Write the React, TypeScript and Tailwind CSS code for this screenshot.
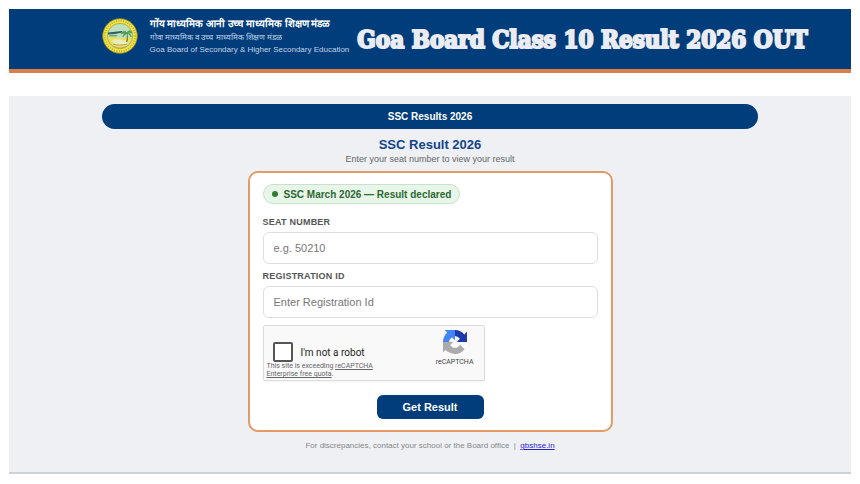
import type { ReactNode } from 'react'

function BoardSeal() {
  return (
    <svg className="h-9 w-9 shrink-0" viewBox="0 0 36 36" role="img" aria-label="Goa Board seal">
      <circle cx="18" cy="18" r="17.3" fill="#f0e23f" stroke="#8d8a35" strokeWidth="0.8" />
      <circle cx="18" cy="18" r="15.2" fill="none" stroke="#b79f35" strokeWidth="1.8" strokeDasharray="0.8 1.6" />
      <circle cx="18" cy="18" r="12.6" fill="#bfe0c0" stroke="#a09a3c" strokeWidth="0.7" />
      <path d="M6 20c4-2 8-1 12 0s8 0 12-1a12.3 12.3 0 0 1-24 1z" fill="#ebe350" />
      <path d="M10 22c4-2 9-1 12 1l5-1-2 4c-5 2-9 2-13 0z" fill="#e6ecc0" />
      <path d="M6 14.500l14-1.500v1.600l-7 1.400-7 .6z" fill="#355f58" />
      <path d="M7 17h9l-2 1.500H7.500z" fill="#6ba593" />
      <path d="M24.500 15c.6 3 .4 6-.5 9h1.500c.7-3 .6-6 0-9z" fill="#7d7b2a" />
      <path d="M25 15c-2-3-5-2-6 1 2-1 4-1 6-1zm0 0c1-3 4-3 5 0-2-.5-3 0-5 0zm0 0c-3 0-4 2-4 4 1-2 3-3 4-4zm0 0c2 0 4 1 4 4-1-2-2-3-4-4z" fill="#4d9e58" stroke="#4d9e58" strokeWidth="0.7" />
      <path d="M11 26c4 1.500 9 1.500 14 0" fill="none" stroke="#c79a35" strokeWidth="1" />
      <path d="M12 28.500c4 2 8 2 12 0" fill="none" stroke="#d4953a" strokeWidth="0.8" />
    </svg>
  )
}

function RecaptchaLogo() {
  return (
    <svg className="h-6 w-6" viewBox="0 0 64 64" aria-hidden="true">
      <path d="M64 31.955a33 33 0 0 0-.037-1.427V4.640l-7.157 7.157C50.949 4.627 42.033.045 32.046.045c-10.393 0-19.626 4.960-25.461 12.642l11.731 11.855a15.550 15.550 0 0 1 4.754-5.334c2.050-1.600 4.955-2.908 8.976-2.908.486 0 .861.057 1.136.164 4.982.393 9.300 3.143 11.843 7.133l-8.304 8.304c10.518-.041 22.400-.066 27.279.054" fill="#1c3aa9" />
      <path d="M31.862.094a33 33 0 0 0-1.427.037H4.547l7.157 7.157C4.534 13.145-.048 22.061-.048 32.048c0 10.393 4.960 19.626 12.642 25.461l11.855-11.731a15.550 15.550 0 0 1-5.334-4.754c-1.600-2.050-2.908-4.955-2.908-8.976 0-.486.057-.861.164-1.136.393-4.982 3.143-9.300 7.133-11.843l8.304 8.304c-.041-10.518-.066-22.400.054-27.279" fill="#4285f4" />
      <path d="M.001 32.045a33 33 0 0 0 .037 1.427V59.360l7.157-7.157c5.857 7.170 14.773 11.752 24.760 11.752 10.393 0 19.626-4.960 25.461-12.642L45.685 39.458a15.550 15.550 0 0 1-4.754 5.334c-2.050 1.600-4.955 2.908-8.976 2.908-.486 0-.861-.057-1.136-.164-4.982-.393-9.300-3.143-11.843-7.133l8.304-8.304c-10.518.041-22.400.066-27.279-.054" fill="#ababab" />
    </svg>
  )
}

function Field({ id, label, placeholder }: { id: string; label: ReactNode; placeholder: string }) {
  return (
    <div className="mt-1.5">
      <label htmlFor={id} className="block text-[9px] leading-3 font-bold tracking-wide text-[#555] uppercase">
        {label}
      </label>
      <input
        id={id}
        type="text"
        placeholder={placeholder}
        className="mt-1 block h-8 w-full rounded-md border border-[#dcdee2] bg-white px-2.5 text-[11px] text-[#333] placeholder:text-[#777]"
      />
    </div>
  )
}

function Captcha() {
  return (
    <div className="mt-[7px] flex h-14 w-[222px] max-w-full justify-between rounded-xs border border-[#dcdcdc] bg-[#f9f9f9] pr-2.5 pl-[3px] font-['Roboto',sans-serif] shadow-xs">
      <div className="pt-4">
        <label className="flex items-center gap-2 pl-1.5 text-[10px] text-[#222]">
          <input type="checkbox" className="h-5 w-5 appearance-none rounded-xs border-2 border-[#555] bg-white" />
          I'm not a robot
        </label>
        <p className="text-[7px] leading-2 text-[#666]">
          This site is exceeding <a href="#recaptcha" className="underline">reCAPTCHA</a>
          <br />
          <a href="#quota" className="underline">Enterprise free quota</a>.
        </p>
      </div>
      <div className="flex flex-col items-center pt-1">
        <RecaptchaLogo />
        <span className="mt-1 text-[7px] leading-2 text-[#444]">reCAPTCHA</span>
      </div>
    </div>
  )
}

export default function App() {
  return (
    <div className="bg-white p-[9px] font-['Liberation_Sans',Arial,sans-serif]">
      <header className="border-b-4 border-[#d97f49] bg-[#003d7a]">
        <div className="flex h-[60px] items-center pb-1.5 pl-[11%]">
          <BoardSeal />
          <div className="ml-3 shrink-0 whitespace-nowrap text-[#c3d3e6]">
            <p className="text-[10px] leading-4 font-bold text-white">गोंय माध्यमिक आनी उच्च माध्यमिक शिक्षण मंडळ</p>
            <p className="text-[8px] leading-3">गोवा माध्यमिक व उच्च माध्यमिक शिक्षण मंडळ</p>
            <p className="text-[8px] leading-3">Goa Board of Secondary &amp; Higher Secondary Education</p>
          </div>
          <h1 className="ml-2 pt-2 font-['DejaVu_Serif_Condensed','DejaVu_Serif',serif] text-[24px] font-bold whitespace-nowrap text-[#ebecf2] [-webkit-text-stroke:2px_#ebecf2]">
            Goa Board Class 10 Result 2026 OUT
          </h1>
        </div>
      </header>

      <main className="mt-[23px] flex flex-col items-center border-b-2 border-[#cfd1d6] bg-[#eef0f4] pt-2 pb-5">
        <div className="w-[78%] rounded-full bg-[#003d7a] text-center text-[10px] leading-[25px] font-bold text-white">
          SSC Results 2026
        </div>
        <h2 className="mt-2 text-[13px] leading-4 font-bold text-[#124489]">SSC Result 2026</h2>
        <p className="text-[9px] leading-3 text-[#666]">Enter your seat number to view your result</p>

        <form
          onSubmit={(e) => e.preventDefault()}
          className="mt-1.5 w-[365px] max-w-full rounded-[10px] border-2 border-[#e29a66] bg-white px-[13px] py-[11px]"
        >
          <div className="mb-3 flex h-5 w-fit items-center gap-1.5 rounded-full border border-[#c6e3c9] bg-[#e8f5e9] px-2 text-[10px] font-bold text-[#2c6a31]">
            <span className="h-1.5 w-1.5 rounded-full bg-[#2e7d32]" />
            SSC March 2026 — Result declared
          </div>
          <Field id="seat" label="Seat Number" placeholder="e.g. 50210" />
          <Field id="registration" label="Registration ID" placeholder="Enter Registration Id" />
          <Captcha />
          <button type="submit" className="mx-auto mt-3.5 block h-6 w-[107px] rounded-md bg-[#003d7a] text-[11px] font-bold text-white">
            Get Result
          </button>
        </form>

        <p className="mt-2 text-[8px] leading-3 text-[#888]">
          For discrepancies, contact your school or the Board office &nbsp;|&nbsp;{' '}
          <a href="https://gbshse.in" className="text-[#2a1fd0] underline">gbshse.in</a>
        </p>
      </main>
    </div>
  )
}
